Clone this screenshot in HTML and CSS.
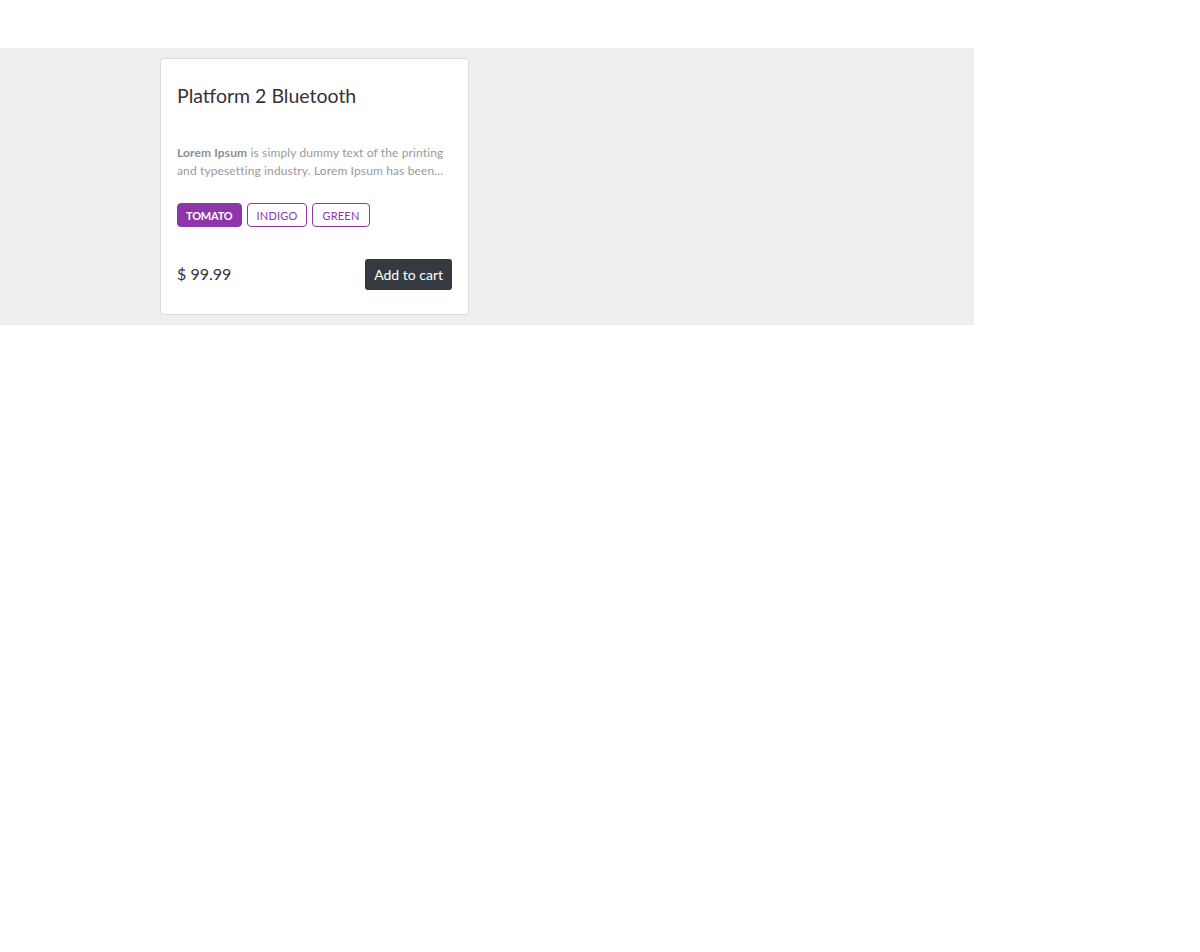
FILE: index.html
```html
<!DOCTYPE html>
<html>
<head>
<meta charset="utf-8">
<link rel="stylesheet" href="styles.css">
</head>
<body>
<section class="band">
  <div class="card">
    <h2 class="title">Platform 2 Bluetooth</h2>
    <p class="desc"><b>Lorem Ipsum</b> is simply dummy text of the printing and typesetting industry. Lorem Ipsum has been...</p>
    <div class="tags">
      <span class="tag active">TOMATO</span>
      <span class="tag">INDIGO</span>
      <span class="tag">GREEN</span>
    </div>
    <div class="footer">
      <span class="price">$ 99.99</span>
      <button class="btn">Add to cart</button>
    </div>
  </div>
</section>
</body>
</html>
```
FILE: styles.css
```css
body {
  margin: 0;
  font-family: Lato, "Open Sans", sans-serif;
  background: #fff;
}
.band {
  margin-top: 48px;
  width: 974px;
  background: #eeeeee;
  padding: 10px 0 10px 160px;
  box-sizing: border-box;
}
.card {
  width: 309px;
  box-sizing: border-box;
  background: #fff;
  border: 1px solid #dcdcdc;
  border-radius: 4px;
  padding: 23px 16px 24px 16px;
}
.title {
  margin: 0;
  font-size: 19.5px;
  font-weight: 400;
  color: #333;
  line-height: 28px;
}
.desc {
  margin: 34px 0 0 0;
  font-size: 12px;
  line-height: 18px;
  color: #999;
  letter-spacing: 0.13px;
}
.desc b {
  font-weight: 700;
  color: #8f8f8f;
}
.tags {
  display: flex;
  gap: 5px;
  margin-top: 23px;
}
.tag {
  display: inline-flex;
  align-items: center;
  height: 24px;
  box-sizing: border-box;
  padding: 0 9px;
  border: 1px solid #8e35a9;
  border-radius: 4px;
  font-size: 11px;
  color: #8e35a9;
  letter-spacing: 0.2px;
}
.tag.active {
  background: #8e35a9;
  color: #fff;
  font-weight: 700;
  padding: 0 8px;
  letter-spacing: -0.2px;
}
.footer {
  display: flex;
  justify-content: space-between;
  align-items: center;
  margin-top: 32px;
}
.price {
  font-size: 16px;
  color: #333;
  padding-bottom: 3px;
}
.btn {
  font-family: Lato, sans-serif;
  font-size: 14px;
  color: #fff;
  background: #343a40;
  border: none;
  border-radius: 3px;
  height: 31px;
  padding: 0 9px;
}
```
